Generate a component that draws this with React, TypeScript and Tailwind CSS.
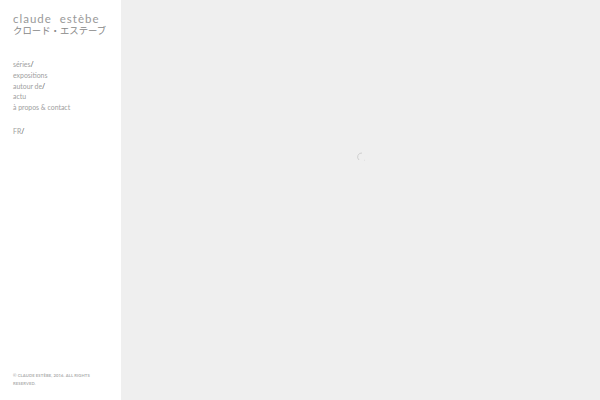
const navItems = [
  { label: 'séries', slash: true },
  { label: 'expositions', slash: false },
  { label: 'autour de', slash: true },
  { label: 'actu', slash: false },
  { label: 'à propos & contact', slash: false },
];

function Spinner() {
  return (
    <svg width="10" height="10" viewBox="0 0 10 10" fill="none" stroke="#cfcfcf" strokeWidth="1">
      <path d="M5 1 A4 4 0 0 0 2 8" />
      <path d="M7 8.5 L8 8" stroke="#e0e0e0" />
    </svg>
  );
}

export default function App() {
  return (
    <div className="flex h-[400px] w-[600px] overflow-hidden bg-white font-['Lato','Noto_Sans_CJK_JP',sans-serif] antialiased">
      <aside className="flex w-[121px] shrink-0 flex-col pl-[13px] pr-[8px] text-[#999]">
        <div className="pt-[12px]">
          <div className="text-[11.5px] leading-[13px] tracking-[1px] whitespace-pre">claude  estèbe</div>
          <div className="text-[9.4px] leading-[12px] text-[#888] whitespace-nowrap">クロード・エステーブ</div>
        </div>

        <nav className="mt-[22px] flex flex-col text-[6.9px] leading-[10.8px] text-[#a0a0a0]">
          {navItems.map((item) => (
            <a key={item.label} className="whitespace-nowrap">
              {item.label}
              {item.slash && <span className="text-[#444]">/</span>}
            </a>
          ))}
        </nav>

        <div className="mt-[13px] text-[6.9px] leading-[11px] text-[#a0a0a0]">
          FR<span className="text-[#444]">/</span>
        </div>

        <footer className="mt-auto pb-[12px] text-[4.2px] leading-[8px] font-bold tracking-[0.1px] text-[#b0b0b0] uppercase">
          © Claude Estèbe, 2016. All rights reserved.
        </footer>
      </aside>

      <main className="flex flex-1 items-start justify-center bg-[#efefef] pt-[152px] pl-[3px]">
        <Spinner />
      </main>
    </div>
  );
}
